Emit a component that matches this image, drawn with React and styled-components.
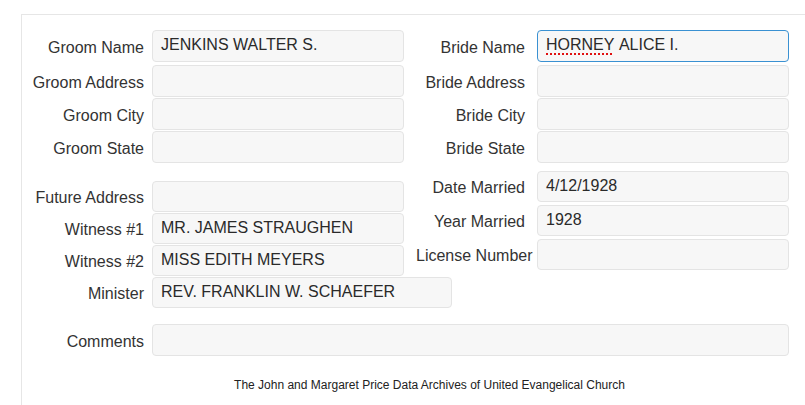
import React from "react";
import styled, { createGlobalStyle } from "styled-components";

const GlobalStyle = createGlobalStyle`
  html, body {
    margin: 0;
    padding: 0;
    overflow: hidden;
    background: #ffffff;
    font-family: "Liberation Sans", Arial, sans-serif;
    color: #333333;
  }
`;

const Page = styled.div`
  padding: 14px 0 0 21px;
`;

const Panel = styled.div`
  box-sizing: border-box;
  width: 816px;
  height: calc(100vh - 14px);
  overflow: hidden;
  border-top: 1px solid #e6e6e6;
  border-left: 1px solid #e6e6e6;
  padding-top: 15px;
`;

const Section = styled.div`
  display: flex;
  margin-top: ${(props) => props.top || 0}px;
`;

const Column = styled.div`
  display: flex;
  flex-direction: column;
  gap: ${(props) => props.gap || 1}px;
  padding-top: ${(props) => props.offset || 0}px;
  padding-left: ${(props) => props.indent || 0}px;
  width: ${(props) => props.width}px;

  & > :first-child {
    margin-bottom: ${(props) => props.firstExtra || 0}px;
  }
`;

const Row = styled.div`
  display: flex;
  align-items: center;
  height: ${(props) => props.h || 32}px;
`;

const Label = styled.label`
  flex: none;
  width: ${(props) => props.w}px;
  margin-right: ${(props) => props.gap}px;
  text-align: right;
  white-space: nowrap;
  font-size: 16px;
  line-height: 18px;
  padding-top: 3px;
  color: #333333;
`;

const Field = styled.div`
  box-sizing: border-box;
  flex: none;
  width: ${(props) => props.w || 252}px;
  height: 100%;
  display: flex;
  align-items: center;
  padding: 0 8px 2px;
  background: #f7f7f7;
  border: 1px solid ${(props) => (props.focused ? "#3a91d2" : "#e4e4e4")};
  border-radius: 4px;
  font-size: 16px;
  color: #2a2a2a;
  white-space: nowrap;
`;

const Misspelt = styled.span`
  text-decoration: underline dotted #e01010;
  text-decoration-thickness: 2px;
  text-underline-offset: 3px;
`;

const Footer = styled.div`
  margin-top: 22px;
  text-align: center;
  font-size: 12px;
  line-height: 14px;
  color: #222222;
`;

const LEFT = { w: 122, gap: 8 };
const RIGHT = { w: 109, gap: 12 };

const Input = ({ label, side, value, h, w, focused, children }) => (
  <Row h={h}>
    <Label w={side.w} gap={side.gap}>
      {label}
    </Label>
    <Field w={w} focused={focused}>
      {children || value}
    </Field>
  </Row>
);

const App = () => {
  return (
    <>
      <GlobalStyle />
      <Page>
        <Panel>
          <Section>
            <Column width={382} firstExtra={2}>
              <Input label="Groom Name" side={LEFT} value="JENKINS WALTER S." />
              <Input label="Groom Address" side={LEFT} />
              <Input label="Groom City" side={LEFT} />
              <Input label="Groom State" side={LEFT} />
            </Column>
            <Column width={390} firstExtra={2} indent={12}>
              <Input label="Bride Name" side={RIGHT} focused>
                <Misspelt>HORNEY</Misspelt>&nbsp;ALICE I.
              </Input>
              <Input label="Bride Address" side={RIGHT} />
              <Input label="Bride City" side={RIGHT} />
              <Input label="Bride State" side={RIGHT} />
            </Column>
          </Section>

          <Section top={8}>
            <Column width={382} offset={10} gap={1}>
              <Input label="Future Address" side={LEFT} h={31} />
              <Input label="Witness #1" side={LEFT} h={31} value="MR. JAMES STRAUGHEN" />
              <Input label="Witness #2" side={LEFT} h={31} value="MISS EDITH MEYERS" />
              <Input
                label="Minister"
                side={LEFT}
                h={31}
                w={300}
                value="REV. FRANKLIN W. SCHAEFER"
              />
            </Column>
            <Column width={390} gap={3} indent={12}>
              <Input label="Date Married" side={RIGHT} h={31} value="4/12/1928" />
              <Input label="Year Married" side={RIGHT} h={31} value="1928" />
              <Input label="License Number" side={RIGHT} h={31} />
            </Column>
          </Section>

          <Section top={16}>
            <Column width={800}>
              <Input label="Comments" side={LEFT} h={32} w={637} />
            </Column>
          </Section>

          <Footer>
            The John and Margaret Price Data Archives of United Evangelical Church
          </Footer>
        </Panel>
      </Page>
    </>
  );
};

export default App;
